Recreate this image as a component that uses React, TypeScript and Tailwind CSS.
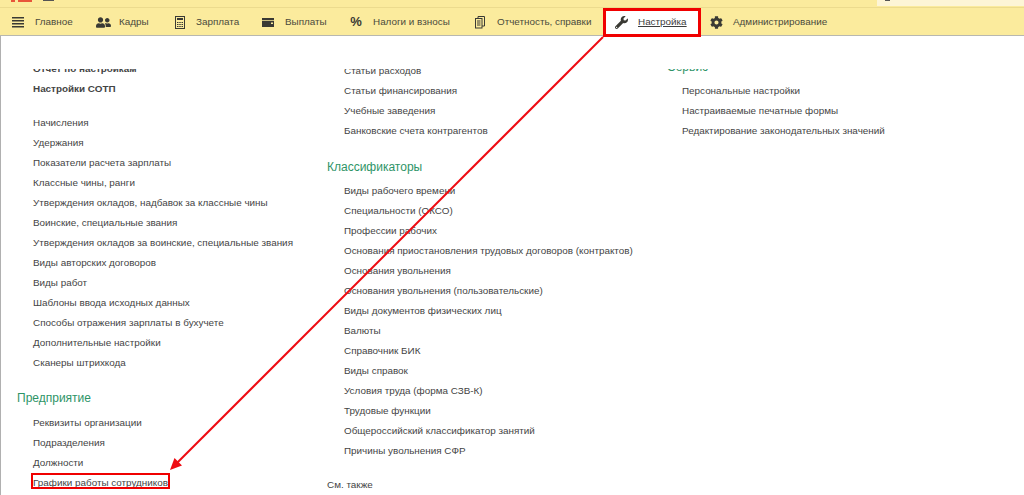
import React from "react";
import { FaWrench, FaCog, FaUserFriends } from "react-icons/fa";

const font = { fontFamily: '"Liberation Sans", Arial, sans-serif' };

function Link({ t, bold }: { t: string; bold?: boolean }) {
  return (
    <div className={`h-5 leading-5 text-[9.9px] whitespace-nowrap text-[#444444] ${bold ? "font-bold" : ""}`}>{t}</div>
  );
}

function Head({ t }: { t: string }) {
  return <div className="h-5 leading-5 text-[12px] text-[#2e9467] whitespace-nowrap">{t}</div>;
}

function Nav({ icon, t, w, gap }: { icon: React.ReactNode; t: string; w: number; gap: number }) {
  return (
    <div className="flex items-center h-7 text-[9.9px] text-[#4a4a3c] whitespace-nowrap shrink-0" style={{ width: w }}>
      <div className="w-[18px] flex justify-center text-[#3a3a34]">{icon}</div>
      <span style={{ marginLeft: gap }}>{t}</span>
    </div>
  );
}

const c1 = ["Начисления","Удержания","Показатели расчета зарплаты","Классные чины, ранги","Утверждения окладов, надбавок за классные чины","Воинские, специальные звания","Утверждения окладов за воинские, специальные звания","Виды авторских договоров","Виды работ","Шаблоны ввода исходных данных","Способы отражения зарплаты в бухучете","Дополнительные настройки","Сканеры штрихкода"];
const c2a = ["Статьи расходов","Статьи финансирования","Учебные заведения","Банковские счета контрагентов"];
const c2b = ["Виды рабочего времени","Специальности (ОКСО)","Профессии рабочих","Основания приостановления трудовых договоров (контрактов)","Основания увольнения","Основания увольнения (пользовательские)","Виды документов физических лиц","Валюты","Справочник БИК","Виды справок","Условия труда (форма СЗВ-К)","Трудовые функции","Общероссийский классификатор занятий","Причины увольнения СФР"];
const c3 = ["Персональные настройки","Настраиваемые печатные формы","Редактирование законодательных значений"];
const c4 = ["Реквизиты организации","Подразделения","Должности","Графики работы сотрудников"];

export default function App() {
  return (
    <div className="relative w-[1024px] h-[495px] overflow-hidden bg-white" style={font}>
      <div className="relative h-2 bg-[#fbeb9d] border-b border-[#ecdb8e] flex items-start">
        <div className="ml-[11px] w-1 h-[2px] bg-[#e8553a]" />
        <div className="ml-[3px] w-[14px] h-[2px] bg-[#e8553a]" />
        <div className="ml-[11px] w-[11px] h-px bg-[#555]" />
        <div className="ml-auto w-[147px] h-[6px] bg-[#fdf5d6]">
          <div className="ml-2 w-[5px] h-px bg-[#555]" />
        </div>
      </div>
      <div className="h-7 bg-[#fbeb9d] border-b border-[#b8b8b0] flex items-start pl-[9px]">
        <Nav w={85} gap={8} t="Главное" icon={<svg width="12" height="13" viewBox="0 0 12 13" fill="#3a3a34"><path d="M0 1h12v1.500H0zM0 4h12v1.500H0zM0 7h12v1.500H0zM0 10h12v1.500H0z"/></svg>} />
        <Nav w={77} gap={7} t="Кадры" icon={<FaUserFriends size={15} />} />
        <Nav w={88} gap={7} t="Зарплата" icon={<svg width="12" height="13" viewBox="0 0 12 13" fill="none" stroke="#3a3a34"><rect x="1.500" y="0.500" width="9" height="12"/><path d="M3 3h6" strokeWidth="2"/><path d="M3 6.500h6M3 8.500h6M3 10.500h6" strokeDasharray="1.500 0.750"/></svg>} />
        <Nav w={88} gap={8} t="Выплаты" icon={<svg width="14" height="11" viewBox="0 0 14 11" fill="#3a3a34"><path d="M1 1h12v2H1zM1 3.800h12V10H1z"/><rect x="10" y="5.500" width="2" height="1.500" fill="#fbeb9d"/></svg>} />
        <Nav w={124} gap={8} t="Налоги и взносы" icon={<span className="text-[13px] font-bold">%</span>} />
        <Nav w={132} gap={8} t="Отчетность, справки" icon={<svg width="12" height="14" viewBox="0 0 12 14" fill="none" stroke="#3a3a34"><rect x="1.500" y="3.500" width="6.500" height="9.500"/><path d="M4 3.500V1.500H10.500V11H8M3 6h3.500M3 8h3.500M3 10h3.500"/></svg>} />
        <div className="relative z-10 w-[104px] shrink-0">
          <div className="w-[98px] h-[29px] bg-white border-[3px] border-[#f00000] flex items-center pl-[9px] text-[9.9px] text-[#3c3c3c] whitespace-nowrap">
            <FaWrench size={13} className="text-[#3a3a34] shrink-0" />
            <span className="ml-[10px] underline">Настройка</span>
          </div>
        </div>
        <Nav w={130} gap={8} t="Администрирование" icon={<FaCog size={13} />} />
      </div>

      <div className="h-[459px] border-l border-[#b0b0b0] pt-[33px]">
        <div className="h-[426px] overflow-hidden flex">
          <div className="w-[326px] pl-4 shrink-0 -mt-[10px]">
            <div className="pl-4">
              <Link t="Отчет по настройкам" bold />
              <Link t="Настройки СОТП" bold />
              <div className="h-[14px]" />
              {c1.map(t => <Link key={t} t={t} />)}
            </div>
            <div className="h-[15px]" />
            <Head t="Предприятие" />
            <div className="h-[5px]" />
            <div className="pl-4">
              {c4.map(t => <Link key={t} t={t} />)}
            </div>
          </div>
          <div className="w-[340px] shrink-0 -mt-2">
            <div className="pl-[17px]">
              {c2a.map(t => <Link key={t} t={t} />)}
            </div>
            <div className="h-4" />
            <Head t="Классификаторы" />
            <div className="h-1" />
            <div className="pl-[17px]">
              {c2b.map(t => <Link key={t} t={t} />)}
            </div>
            <div className="h-[14px]" />
            <Link t="См. также" />
          </div>
          <div className="-mt-3">
            <Head t="Сервис" />
            <div className="h-1" />
            <div className="pl-[15px]">
              {c3.map(t => <Link key={t} t={t} />)}
            </div>
          </div>
        </div>
      </div>

      <div className="absolute left-[31px] top-[473px] w-[139px] h-[16px] border-2 border-[#f00000]" />
      <svg className="absolute left-0 top-0" width="1024" height="495">
        <line x1="603" y1="37" x2="177" y2="463" stroke="#ee0b12" strokeWidth="2" />
        <path d="M170 470 L174.500 458 L182 465.500 Z" fill="#ee0b12" />
      </svg>
    </div>
  );
}
